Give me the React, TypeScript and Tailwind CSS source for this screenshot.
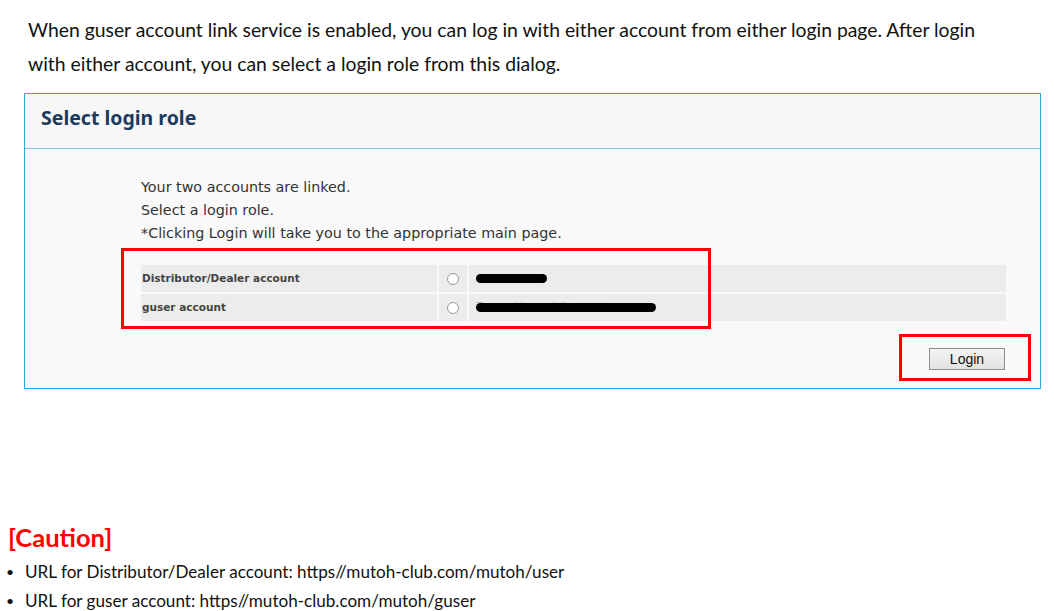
import React from 'react';

const rows = [
  { id: 1, label: 'Distributor/Dealer account', redact: 'w-[71px]', ghost: '' },
  { id: 2, label: 'guser account', redact: 'w-[180px]', ghost: 'T         M        ll@   t  l   i' },
];

function Redacted({ width, ghost }: { width: string; ghost: string }) {
  return (
    <div className="relative flex h-full items-center">
      {ghost && (
        <span className="absolute left-0 top-[5px] whitespace-pre text-[11px] text-[#bbb]">{ghost}</span>
      )}
      <span className={`relative h-[9px] rounded-full bg-black ${width}`} />
    </div>
  );
}

export default function App() {
  return (
    <div className="h-[611px] w-[1054px] overflow-hidden bg-white">
      <p className="pl-[28px] pt-[13px] font-['Lato',sans-serif] text-[19.35px] leading-[34px] text-[#111]">
        When guser account link service is enabled, you can log in with either account from either login page. After login
        <br />
        with either account, you can select a login role from this dialog.
      </p>

      <div className="ml-[24px] mt-[12px] w-[1017px] border border-[#2aabe4] bg-[#f9f9f9] font-['DejaVu_Sans',sans-serif]">
        <div className="flex h-[55px] items-center border-b border-[#7cc4ec] bg-[#f7f7f7] pb-[6px] pl-[16px]">
          <h2 className="font-['Noto_Sans',sans-serif] text-[19.5px] font-bold text-[#1c3a5e]">Select login role</h2>
        </div>

        <div className="relative pl-[116px] pt-[27px]">
          <div className="text-[14.3px] leading-[23px] text-[#333]">
            <p>Your two accounts are linked.</p>
            <p>Select a login role.</p>
            <p>*Clicking Login will take you to the appropriate main page.</p>
          </div>

          <div className="mt-[20px] mr-[34px] flex flex-col gap-[2px]">
            {rows.map((row) => (
              <div key={row.id} className="flex h-[27px] bg-[#ececec]">
                <div className="flex w-[298px] items-center border-r-2 border-[#f9f9f9] pl-[1px] text-[10.5px] font-bold text-[#444]">
                  {row.label}
                </div>
                <div className="flex w-[30px] items-center justify-center border-r-2 border-[#f9f9f9]">
                  <span className="h-[12px] w-[12px] rounded-full border border-[#9a9a9a] bg-white" />
                </div>
                <div className="flex-1 pl-[7px]">
                  <Redacted width={row.redact} ghost={row.ghost} />
                </div>
              </div>
            ))}
          </div>

          <div className="flex justify-end pb-[18px] pr-[35px] pt-[27px]">
            <button className="h-[22px] w-[76px] border border-[#8f8f8f] bg-gradient-to-b from-[#f4f4f4] to-[#e2e2e2] font-['Liberation_Sans',sans-serif] text-[14px] leading-none text-[#111]">
              Login
            </button>
          </div>

          {/* annotation boxes */}
          <div className="pointer-events-none absolute left-[96px] top-[99px] h-[81px] w-[590px] border-[3px] border-[#ff0000]" />
          <div className="pointer-events-none absolute left-[874px] top-[185px] h-[47px] w-[132px] border-[3px] border-[#ff0000]" />
        </div>
      </div>

      <div className="mt-[132px] font-['Lato',sans-serif]">
        <h3 className="pl-[8px] text-[25.5px] font-bold leading-[32px] text-[#ff0000]">[Caution]</h3>
        <ul className="mt-[5px] text-[17.1px] leading-[28.5px] text-[#111]">
          <li className="flex pl-[6px]">
            <span className="w-[19px] text-[14px]">•</span>
            URL for Distributor/Dealer account: https//mutoh-club.com/mutoh/user
          </li>
          <li className="flex pl-[6px]">
            <span className="w-[19px] text-[14px]">•</span>
            URL for guser account: https//mutoh-club.com/mutoh/guser
          </li>
        </ul>
      </div>
    </div>
  );
}
